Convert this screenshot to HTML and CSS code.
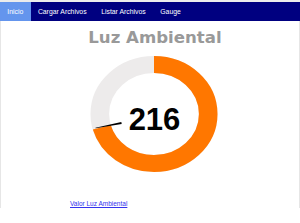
FILE: index.html
```html
<!DOCTYPE html>
<html lang="es">
<head>
<meta charset="utf-8">
<title>Luz Ambiental</title>
<link rel="stylesheet" href="styles.css">
</head>
<body>
<nav class="topnav">
  <a class="nav-item active" href="#">Inicio</a>
  <a class="nav-item" href="#">Cargar Archivos</a>
  <a class="nav-item" href="#">Listar Archivos</a>
  <a class="nav-item" href="#">Gauge</a>
</nav>
<main class="content">
  <section class="gauge-box">
    <h1 class="gauge-title">Luz Ambiental</h1>
    <svg class="gauge" width="136" height="120" viewBox="0 0 136 120">
      <g transform="translate(68 60) scale(1.095 1)">
        <circle cx="0" cy="0" r="49.5" fill="none" stroke="#edebeb" stroke-width="17"/>
        <circle cx="0" cy="0" r="49.5" fill="none" stroke="#ff7700" stroke-width="17"
                stroke-dasharray="219.4 400" transform="rotate(-90)"/>
      </g>
      <polygon points="35.67,69.88 35.33,68.12 9.45,73.75 9.55,74.25" fill="#000"/>
      <text class="gauge-value" x="68.5" y="76" text-anchor="middle">216</text>
    </svg>
  </section>
  <p class="link-row"><a class="value-link" href="#">Valor Luz Ambiental</a></p>
</main>
</body>
</html>
```
FILE: styles.css
```css
html, body {
  margin: 0;
  padding: 0;
  background: #fff;
}

body {
  font-family: "Liberation Sans", Arial, sans-serif;
  border-top: 2px solid #ececec;
}

.topnav {
  display: flex;
  background: #000080;
  height: 19px;
}

.nav-item {
  color: #fff;
  text-decoration: none;
  font-size: 6.85px;
  line-height: 19px;
  padding: 0 7.3px;
}

.nav-item.active {
  background: #6495ed;
}

.content {
  padding-left: 8px;
  border-left: 1px solid #e6e6e6;
  border-right: 1px solid #e6e6e6;
}

.gauge-box {
  display: flex;
  flex-direction: column;
  align-items: center;
}

.gauge-title {
  font-family: "DejaVu Sans", Verdana, sans-serif;
  font-weight: bold;
  font-size: 16.6px;
  line-height: 20px;
  color: #999999;
  margin: 7px 0 5.5px 2px;
}

.gauge {
  display: block;
}

.gauge-value {
  font-family: "Liberation Sans", Arial, sans-serif;
  font-weight: bold;
  font-size: 31px;
  fill: #010101;
}

.link-row {
  margin: 26px 0 0;
  padding-left: 61px;
  font-size: 6.5px;
  line-height: 8px;
}

.value-link {
  color: #3333ee;
}
```
